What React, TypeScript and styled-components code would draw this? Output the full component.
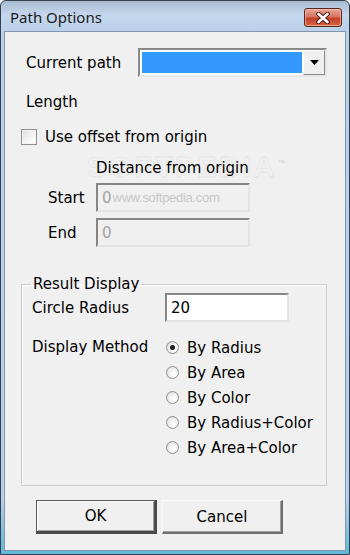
import styled, { createGlobalStyle } from "styled-components";

const Global = createGlobalStyle`
  html, body {
    margin: 0;
    padding: 0;
    background: #f0f0f0;
  }
  body {
    font-family: "DejaVu Sans", Tahoma, sans-serif;
    font-size: 15px;
    color: #000;
  }
`;

const Window = styled.div`
  width: 350px;
  height: 555px;
  box-sizing: border-box;
  border: 1px solid #34404e;
  border-radius: 6px 6px 0 0;
  background: linear-gradient(to bottom, #a9bccf 0, #c4d7ec 14px, #bad1ea 30px, #b6d0ea 90%, #5fb8d8 100%);
  padding: 0 3px 3px;
  display: flex;
  flex-direction: column;
`;

const TitleBar = styled.div`
  height: 30px;
  display: flex;
  align-items: flex-start;
  justify-content: space-between;
  padding: 0 4px 0 6px;
`;

const Title = styled.span`
  font-family: "Noto Sans", "Open Sans", sans-serif;
  font-size: 15px;
  line-height: 32px;
  color: #1b1b1b;
`;

const CloseButton = styled.div`
  margin-top: 7px;
  width: 38px;
  height: 19px;
  box-sizing: border-box;
  border: 1px solid #5c2519;
  border-radius: 3px;
  background: linear-gradient(to bottom, #e9a899 0, #d8745f 45%, #c3422a 55%, #d6643f 100%);
  box-shadow: inset 0 0 0 1px rgba(255, 200, 190, 0.6);
  display: flex;
  align-items: center;
  justify-content: center;
`;

const Body = styled.div`
  flex: 1;
  background: #f0f0f0;
  border: 1px solid #8396ad;
  padding-left: 16px;
  display: flex;
  flex-direction: column;
  position: relative;
`;

const Row = styled.div<{ $top: number; $indent?: number; $h: number }>`
  display: flex;
  align-items: center;
  margin-top: ${(p) => p.$top}px;
  margin-left: ${(p) => p.$indent ?? 0}px;
  height: ${(p) => p.$h}px;
  white-space: nowrap;
`;

const Label = styled.span<{ $w?: number; $lh?: number }>`
  display: inline-block;
  width: ${(p) => (p.$w ? `${p.$w}px` : "auto")};
  line-height: ${(p) => p.$lh ?? 20}px;
`;

const Combo = styled.div`
  width: 189px;
  height: 29px;
  box-sizing: border-box;
  border-style: solid;
  border-width: 2px;
  border-color: #8a8a8a #e6e6e6 #e6e6e6 #8a8a8a;
  background: #fff;
  display: flex;
  padding: 2px 1px 2px 2px;
`;

const ComboValue = styled.div`
  flex: 1;
  background: #3399ff;
`;

const ComboButton = styled.div`
  width: 22px;
  box-sizing: border-box;
  border-style: solid;
  border-width: 1px;
  border-color: #fff #8a8a8a #8a8a8a #fff;
  background: #f0f0f0;
  display: flex;
  align-items: center;
  justify-content: center;
  margin: -2px -1px -2px 1px;
`;

const Check = styled.span`
  width: 16px;
  height: 16px;
  box-sizing: border-box;
  border: 1px solid #8e8f8f;
  background: linear-gradient(135deg, #dcdcdc 0, #f6f6f6 60%, #fff 100%);
  box-shadow: inset 0 0 0 1px #f4f4f4;
  margin-right: 8px;
`;

const Field = styled.div<{ $w: number; $disabled?: boolean }>`
  width: ${(p) => p.$w}px;
  height: 29px;
  box-sizing: border-box;
  border-style: solid;
  border-width: 2px;
  border-color: #858585 #e3e3e3 #e3e3e3 #858585;
  background: ${(p) => (p.$disabled ? "#f0f0f0" : "#fff")};
  color: ${(p) => (p.$disabled ? "#a3a3a3" : "#000")};
  padding-left: 4px;
  display: flex;
  align-items: center;
`;

const Watermark = styled.span`
  font-family: "Liberation Sans Narrow", "Liberation Sans", sans-serif;
  font-size: 13px;
  color: #c8c8c8;
  margin-left: 1px;
  letter-spacing: -0.3px;
`;

const BigMark = styled.div`
  position: absolute;
  left: 82px;
  top: 118px;
  font-family: "Liberation Sans", sans-serif;
  font-weight: bold;
  font-size: 30px;
  letter-spacing: 2px;
  color: transparent;
  -webkit-text-stroke: 1px rgba(0, 0, 0, 0.06);
  pointer-events: none;
  sup {
    font-size: 9px;
    font-weight: normal;
    -webkit-text-stroke: 0;
    color: rgba(0, 0, 0, 0.15);
  }
`;

const Group = styled.fieldset`
  margin: 28px 0 0 0;
  width: 306px;
  height: 211px;
  box-sizing: border-box;
  border: 1px solid #cdcdcd;
  box-shadow: inset 1px 1px 0 #fff;
  padding: 0 0 0 10px;
  display: flex;
  flex-direction: column;
`;

const Legend = styled.legend`
  padding: 0 2px;
  margin-left: -1px;
  line-height: 18px;
`;

const MethodRow = styled.div`
  display: flex;
  align-items: flex-start;
  margin-top: 13px;
`;

const RadioList = styled.div`
  display: flex;
  flex-direction: column;
`;

const RadioItem = styled.div`
  display: flex;
  align-items: center;
  height: 25px;
`;

const Radio = styled.span<{ $on?: boolean }>`
  width: 13px;
  height: 13px;
  box-sizing: border-box;
  border-radius: 50%;
  border: 1px solid #8f8f8f;
  background: radial-gradient(circle at 65% 65%, #ffffff 0, #f2f2f2 45%, #d2d2d2 100%);
  margin: 0 8px 0 1px;
  display: flex;
  align-items: center;
  justify-content: center;
  &::after {
    content: "";
    width: 5px;
    height: 5px;
    border-radius: 50%;
    background: ${(p) => (p.$on ? "#1a1a1a" : "transparent")};
  }
`;

const Buttons = styled.div`
  display: flex;
  gap: 5px;
  margin: 14px 0 0 15px;
`;

const Button = styled.div<{ $default?: boolean }>`
  width: 121px;
  height: 34px;
  box-sizing: border-box;
  border-style: solid;
  border-width: ${(p) => (p.$default ? "1px 3px 3px 1px" : "1px 2px 2px 1px")};
  border-color: ${(p) =>
    p.$default ? "#5a5a5a #4a4a4a #4a4a4a #5a5a5a" : "#f8f8f8 #6e6e6e #6e6e6e #f8f8f8"};
  box-shadow: ${(p) => (p.$default ? "inset 1px 1px 0 #fff, inset -1px -1px 0 #a0a0a0" : "inset -1px -1px 0 #a0a0a0")};
  background: #f0f0f0;
  display: flex;
  align-items: center;
  justify-content: center;
`;

const methods = ["By Radius", "By Area", "By Color", "By Radius+Color", "By Area+Color"];

export default function App() {
  return (
    <>
      <Global />
      <Window>
        <TitleBar>
          <Title>Path Options</Title>
          <CloseButton>
            <svg width="16" height="12" viewBox="0 0 16 12">
              <path
                d="M3.5 2 L12.5 10 M12.5 2 L3.5 10"
                stroke="#4a1a12"
                strokeWidth="4.4"
                strokeLinecap="round"
                fill="none"
              />
              <path
                d="M3.5 2 L12.5 10 M12.5 2 L3.5 10"
                stroke="#fff"
                strokeWidth="2.6"
                strokeLinecap="round"
                fill="none"
              />
            </svg>
          </CloseButton>
        </TitleBar>
        <Body>
          <BigMark>
            SOFTPEDIA<sup>™</sup>
          </BigMark>
          <Row $top={16} $indent={5} $h={29}>
            <Label $w={112}>Current path</Label>
            <Combo>
              <ComboValue />
              <ComboButton>
                <svg width="9" height="5" viewBox="0 0 9 5">
                  <path d="M0 0 H9 L4.5 5 Z" fill="#000" />
                </svg>
              </ComboButton>
            </Combo>
          </Row>
          <Row $top={15} $indent={5} $h={20}>
            <Label>Length</Label>
          </Row>
          <Row $top={15} $h={20}>
            <Check />
            <Label>Use offset from origin</Label>
          </Row>
          <Row $top={11} $indent={75} $h={20}>
            <Label>Distance from origin</Label>
          </Row>
          <Row $top={5} $indent={27} $h={29}>
            <Label $w={48}>Start</Label>
            <Field $w={154} $disabled>
              0<Watermark>www.softpedia.com</Watermark>
            </Field>
          </Row>
          <Row $top={6} $indent={27} $h={29}>
            <Label $w={48}>End</Label>
            <Field $w={154} $disabled>
              0
            </Field>
          </Row>
          <Group>
            <Legend>Result Display</Legend>
            <Row $top={0} $h={29}>
              <Label $w={133}>Circle Radius</Label>
              <Field $w={124}>20</Field>
            </Row>
            <MethodRow>
              <Label $w={133} $lh={25}>
                Display Method
              </Label>
              <RadioList>
                {methods.map((m, i) => (
                  <RadioItem key={m}>
                    <Radio $on={i === 0} />
                    <Label>{m}</Label>
                  </RadioItem>
                ))}
              </RadioList>
            </MethodRow>
          </Group>
          <Buttons>
            <Button $default>OK</Button>
            <Button>Cancel</Button>
          </Buttons>
        </Body>
      </Window>
    </>
  );
}
